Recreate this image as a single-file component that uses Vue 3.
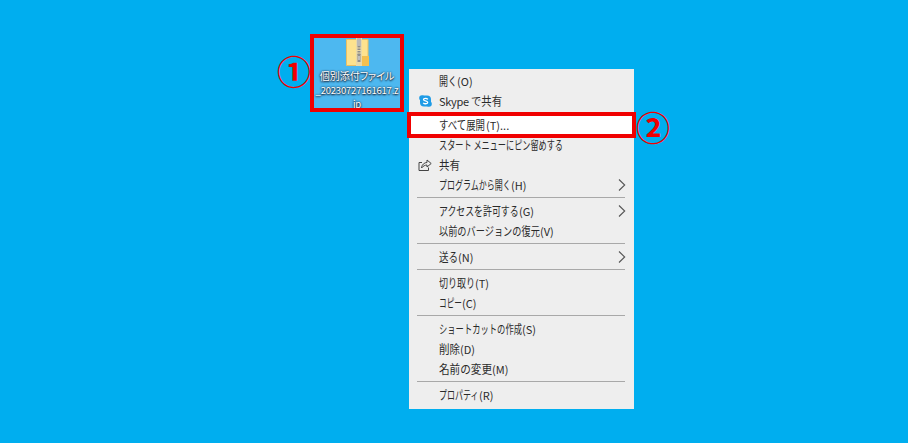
<script setup>
// w = width in px the Japanese part of a label takes in the reference,
// its kana are narrower than any installed font so they get squeezed to fit
const groups = [
  [
    { text: '開く', key: '(O)', w: 18 },
    { latin: 'Skype ', text: 'で共有', w: 31, icon: 'skype' },
  ],
  [
    { text: 'すべて展開', key: '(T)...', w: 47, picked: true },
    { text: 'スタート メニューにピン留めする', w: 124 },
    { text: '共有', w: 21, icon: 'share' },
    { text: 'プログラムから開く', key: '(H)', w: 72, more: true },
  ],
  [
    { text: 'アクセスを許可する', key: '(G)', w: 80, more: true },
    { text: '以前のバージョンの復元', key: '(V)', w: 101 },
  ],
  [{ text: '送る', key: '(N)', w: 19, more: true }],
  [
    { text: '切り取り', key: '(T)', w: 36 },
    { text: 'コピー', key: '(C)', w: 23 },
  ],
  [
    { text: 'ショートカットの作成', key: '(S)', w: 83 },
    { text: '削除', key: '(D)', w: 21 },
    { text: '名前の変更', key: '(M)', w: 53 },
  ],
  [{ text: 'プロパティ', key: '(R)', w: 40 }],
];

const FONT_SIZE = 12;

const squeeze = (item) => {
  const spaces = item.text.split(' ').length - 1;
  const natural = (item.text.length - spaces) * FONT_SIZE + spaces * FONT_SIZE * 0.224;
  return { width: item.w + 'px', transform: `scaleX(${item.w / natural})` };
};
</script>

<template>
  <div class="desktop">
    <div class="file">
      <svg class="zip" width="23" height="28" viewBox="0 0 23 28">
        <path d="M0.500 1.500h21.500v26H0.500z" fill="#fde28e" stroke="#e8bf63" stroke-width="1" />
        <path d="M15 18h8v10h-8z" fill="#f3c04f" />
        <path d="M10 0h6v28h-6z" fill="#e9d9a8" />
        <path d="M11 0h4v8h-4z" fill="#b9b9b9" />
        <path d="M13 8v10" stroke="#8d8d8d" stroke-width="3" stroke-dasharray="1.500 1" />
        <path d="M11.500 16h3v8h-3z" fill="#8f8f8f" />
        <path d="M12.500 18h1v4h-1z" fill="#eee" />
      </svg>
      <div class="file-name">
        <div class="name-main">個別添付ファイル</div>
        <div class="name-rest">_20230727161617.z</div>
        <div class="name-rest">ip</div>
      </div>
    </div>
    <span class="mark mark-one">①</span>
    <span class="mark mark-two">②</span>

    <div class="menu">
      <template v-for="(group, i) in groups" :key="i">
        <div v-if="i > 0" class="sep"></div>
        <div
          v-for="item in group"
          :key="item.text"
          class="row"
          :class="{ picked: item.picked }"
        >
          <span class="row-icon">
            <svg v-if="item.icon === 'skype'" width="13" height="12" viewBox="0 0 13 12">
              <rect x="1" y="0.500" width="11" height="11" rx="4" fill="#1e9be6" />
              <circle cx="3" cy="3" r="2.800" fill="#1e9be6" />
              <circle cx="10" cy="9" r="2.800" fill="#1e9be6" />
              <path d="M8.800 4.300C8 3 4.500 2.900 4.500 4.500c0 1.800 4.200 1 4.200 3c0 1.600-3.400 1.600-4.500 0.300" fill="none" stroke="#fff" stroke-width="1.300" />
            </svg>
            <svg v-else-if="item.icon === 'share'" width="14" height="12" viewBox="0 0 14 12">
              <path d="M4 3.500H1v8h9.500V8.500" fill="none" stroke="#444" stroke-width="1" />
              <path d="M3.500 9c0.300-3.500 3-5.500 5.500-5.500V1l4.200 3.500L9 8V6C7 6 5 7.200 3.500 9z" fill="none" stroke="#444" stroke-width="1" />
            </svg>
          </span>
          <span class="row-label">
            <span v-if="item.latin" class="latin">{{ item.latin }}</span>
            <span class="jp" :style="squeeze(item)">{{ item.text }}</span>
            <span v-if="item.key">{{ item.key }}</span>
          </span>
          <svg v-if="item.more" class="chevron" width="8" height="12" viewBox="0 0 8 12">
            <path d="M1 0.500L6.700 6L1 11.500" fill="none" stroke="#555" stroke-width="1.100" />
          </svg>
        </div>
      </template>
    </div>
  </div>
</template>

<style>
html,
body {
  margin: 0;
  background: #00aeef;
}
</style>

<style scoped>
.desktop {
  position: relative;
  width: 908px;
  height: 443px;
  overflow: hidden;
  background: #00aeef;
  font-family: "Noto Sans CJK JP", "Noto Sans", sans-serif;
}

.file {
  position: absolute;
  left: 310px;
  top: 34px;
  width: 86px;
  height: 70px;
  overflow: hidden;
  border: 4px solid #f00000;
  background: #4db8f0;
  display: flex;
  flex-direction: column;
  align-items: center;
}

.zip {
  flex: none;
}

.file-name {
  margin-top: 3px;
  color: #fff;
  line-height: 14px;
  text-align: center;
  white-space: nowrap;
  text-shadow: 0 1px 2px #112, 0 0 2px #112;
}

.name-main {
  font-size: 10px;
  font-feature-settings: "palt";
}

.name-rest {
  font-size: 9.500px;
  letter-spacing: -0.200px;
}

.mark {
  position: absolute;
  color: #f00000;
  font-size: 34px;
  line-height: 34px;
  font-weight: 700;
}

.mark-one {
  left: 277px;
  top: 54px;
}

.mark-two {
  left: 636px;
  top: 110px;
}

.menu {
  position: absolute;
  left: 409px;
  top: 69px;
  width: 225px;
  height: 340px;
  box-sizing: border-box;
  padding-top: 1px;
  background: #eeeeee;
}

.row {
  position: relative;
  box-sizing: border-box;
  height: 20px;
  padding-top: 1px;
  display: flex;
  align-items: center;
  color: #2a2a2a;
  font-size: 11px;
  white-space: nowrap;
}

.row.picked {
  height: 18px;
  margin: 2px 2px 0;
  padding-top: 0;
  background: #fff;
  outline: 4px solid #f00000;
  z-index: 1;
}

.row.picked .row-icon {
  width: 28px;
}

.row-icon {
  width: 30px;
  flex: none;
  display: flex;
  justify-content: center;
  box-sizing: border-box;
  padding-left: 2px;
}

.row-label {
  flex: 1;
  line-height: 16px;
}

.latin {
  letter-spacing: -0.300px;
}

.jp {
  display: inline-block;
  font-size: 12px;
  transform-origin: left center;
}

.chevron {
  margin-right: 8px;
}

.sep {
  height: 1px;
  margin: 3px 0 2px 8px;
  width: 208px;
  background: #a8a8a8;
}
</style>
